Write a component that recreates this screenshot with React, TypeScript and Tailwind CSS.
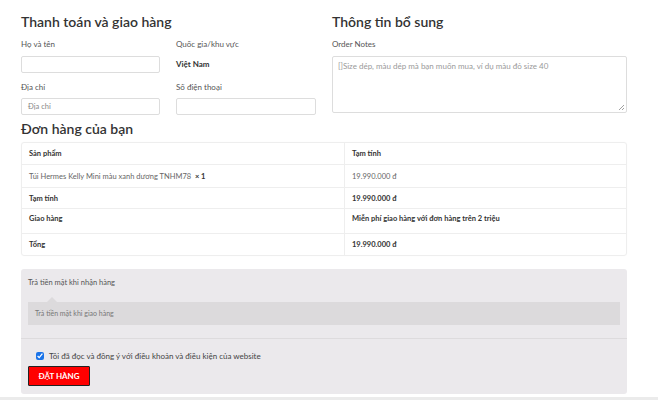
import React from "react";

const font = { fontFamily: "Lato, 'Noto Sans', sans-serif" };

export default function App() {
  return (
    <div className="w-[658px] h-[400px] bg-white overflow-hidden text-[#333]" style={font}>
      <div className="px-[21px] pt-[12px] w-[648px]">
        <div className="flex gap-[16px]">
          {/* left */}
          <div className="w-[295px]">
            <h2 className="text-[14px] leading-[20px] font-semibold text-[#333]">Thanh toán và giao hàng</h2>
            <div className="mt-[6px] flex gap-[16px]">
              <div className="w-[139px]">
                <div className="h-[12px] text-[8px] leading-[12px] text-[#555]">Họ và tên</div>
                <div className="mt-[6px] h-[17px] border border-[#ddd] rounded-[2px]"></div>
              </div>
              <div className="w-[140px]">
                <div className="h-[12px] text-[8px] leading-[12px] text-[#555]">Quốc gia/khu vực</div>
                <div className="mt-[6px] h-[17px] text-[8px] leading-[17px] font-bold text-[#333]">Việt Nam</div>
              </div>
            </div>
            <div className="mt-[8px] flex gap-[16px]">
              <div className="w-[139px]">
                <div className="h-[12px] text-[8px] leading-[12px] text-[#555]">Địa chỉ</div>
                <div className="mt-[5px] h-[17px] border border-[#ddd] rounded-[2px] px-[6px] text-[7.5px] leading-[15px] text-[#888]">Địa chỉ</div>
              </div>
              <div className="w-[140px]">
                <div className="h-[12px] text-[8px] leading-[12px] text-[#555]">Số điện thoại</div>
                <div className="mt-[5px] h-[17px] border border-[#ddd] rounded-[2px]"></div>
              </div>
            </div>
          </div>
          {/* right */}
          <div className="w-[295px]">
            <h2 className="text-[14px] leading-[20px] font-semibold text-[#333]">Thông tin bổ sung</h2>
            <div className="mt-[6px] h-[12px] text-[8px] leading-[12px] text-[#555]">Order Notes</div>
            <div className="mt-[6px] h-[57px] border border-[#ddd] rounded-[2px] relative px-[5px] pt-[3px] text-[8px] leading-[12px] text-[#999]">
              []Size dép, màu dép mà bạn muốn mua, ví dụ màu đỏ size 40
              <svg className="absolute right-[1px] bottom-[1px]" width="7" height="7" viewBox="0 0 7 7">
                <path d="M6 1L1 6M6 4L4 6" stroke="#888" strokeWidth="0.8" />
              </svg>
            </div>
          </div>
        </div>

        <h2 className="mt-[4px] text-[14px] leading-[20px] font-semibold text-[#333]">Đơn hàng của bạn</h2>

        <div className="mt-[3px] w-[606px] border border-[#eee] rounded-[3px] text-[7.5px] shadow-[0_0_1px_rgba(0,0,0,0.05)]">
          <div className="flex h-[22px] border-b border-[#eee]">
            <div className="w-[323px] border-r border-[#eee] pl-[7px] leading-[22px] font-bold text-[#333]">Sản phẩm</div>
            <div className="flex-1 pl-[7px] leading-[22px] font-bold text-[#333]">Tạm tính</div>
          </div>
          <div className="flex h-[23px] border-b border-[#eee]">
            <div className="w-[323px] border-r border-[#eee] pl-[7px] leading-[23px] text-[#666]">Túi Hermes Kelly Mini màu xanh dương TNHM78 <span className="text-[#333] font-bold">&nbsp;× 1</span></div>
            <div className="flex-1 pl-[7px] leading-[23px] text-[#666]">19.990.000 đ</div>
          </div>
          <div className="flex h-[21px] border-b border-[#eee]">
            <div className="w-[323px] border-r border-[#eee] pl-[7px] leading-[21px] font-bold text-[#333]">Tạm tính</div>
            <div className="flex-1 pl-[7px] leading-[21px] font-bold text-[#333]">19.990.000 đ</div>
          </div>
          <div className="flex h-[25px] border-b border-[#eee]">
            <div className="w-[323px] border-r border-[#eee] pl-[7px] pt-[4px] leading-[12px] font-bold text-[#333]">Giao hàng</div>
            <div className="flex-1 pl-[7px] pt-[4px] leading-[12px] font-bold text-[#333]">Miễn phí giao hàng với đơn hàng trên 2 triệu</div>
          </div>
          <div className="flex h-[21px]">
            <div className="w-[323px] border-r border-[#eee] pl-[7px] leading-[21px] font-bold text-[#333]">Tổng</div>
            <div className="flex-1 pl-[7px] leading-[21px] font-bold text-[#333]">19.990.000 đ</div>
          </div>
        </div>

        <div className="mt-[13px] w-[606px] h-[125px] bg-[#ebe9ec] rounded-[3px] flex flex-col">
          <div className="px-[7px] pt-[8px] h-[28px] text-[7.5px] leading-[12px] text-[#555]">Trả tiền mặt khi nhận hàng</div>
          <div className="mx-[7px] mt-[5px] h-[23px] bg-[#dcdadc] relative px-[7px] text-[7px] leading-[23px] text-[#777]">
            <div className="absolute left-[19px] top-[-5px] w-0 h-0 border-l-[5px] border-r-[5px] border-b-[5px] border-l-transparent border-r-transparent border-b-[#dcdadc]"></div>
            Trả tiền mặt khi giao hàng
          </div>
          <div className="mt-[13px] h-[1px] bg-[#dddbdd]"></div>
          <div className="px-[15px] mt-[11px] flex items-center h-[12px] text-[8px] text-[#444]">
            <input type="checkbox" defaultChecked className="w-[8px] h-[8px] m-0 mr-[5px] accent-[#1a73e8]" />
            <span>Tôi đã đọc và đồng ý với điều khoản và điều kiện của website</span>
          </div>
          <div className="mx-[7px] mt-[4px] w-[62px] h-[20px] bg-[#ff0000] border border-[#222] rounded-[1px] text-white font-bold text-[8px] leading-[18px] text-center">ĐẶT HÀNG</div>
        </div>
      </div>
      <div className="mt-[3px] h-[10px] bg-[#ebebeb]"></div>
    </div>
  );
}
